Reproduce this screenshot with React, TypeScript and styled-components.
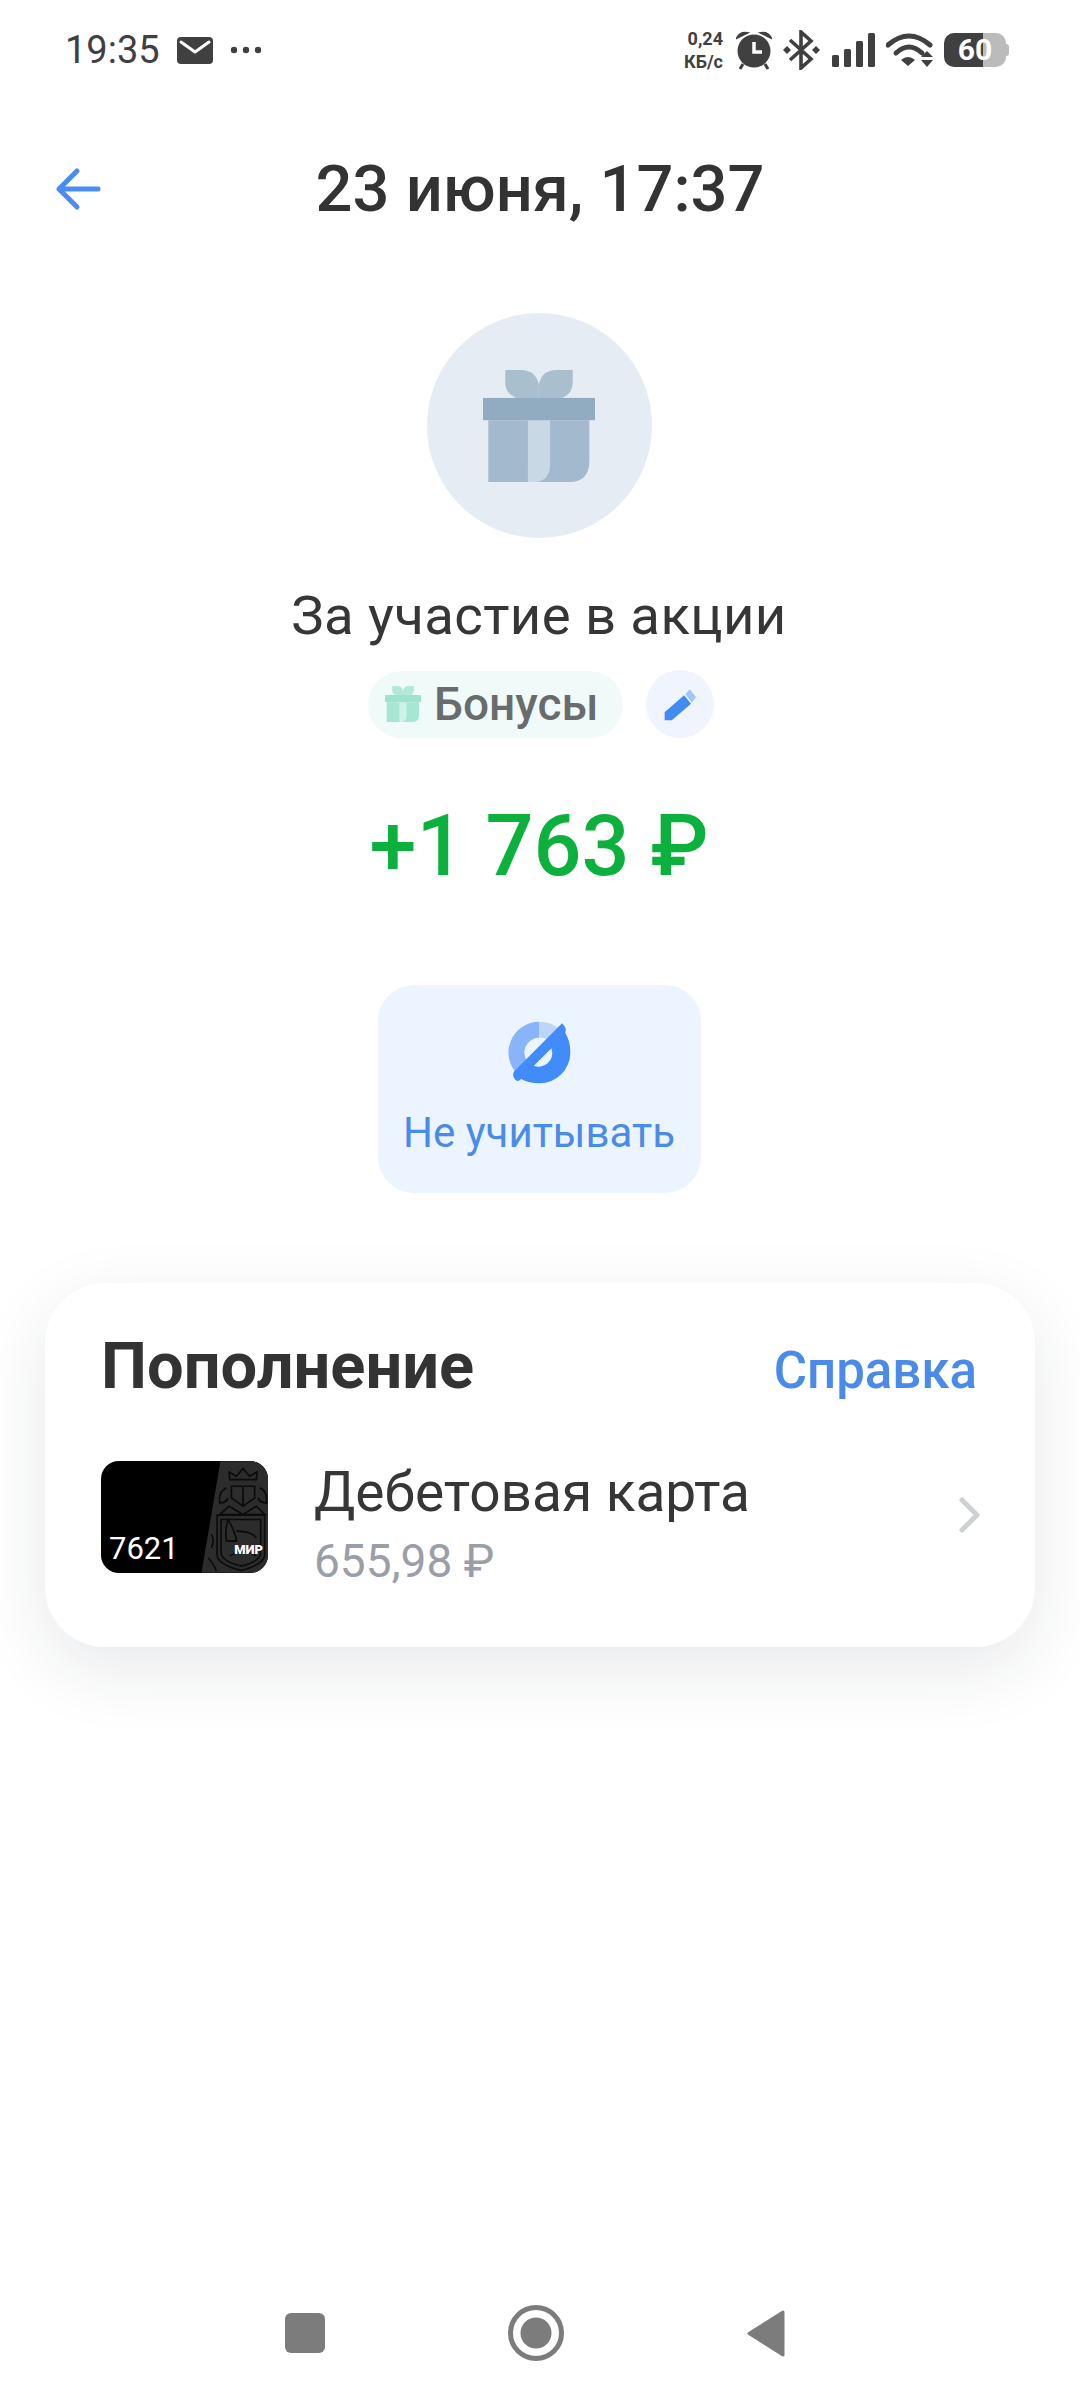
import React, { FC } from "react";
import styled, { createGlobalStyle } from "styled-components";

const GlobalStyle = createGlobalStyle`
  html, body {
    margin: 0;
    padding: 0;
    background: #ffffff;
  }
  body {
    font-family: Roboto, "Noto Sans", sans-serif;
  }
`;

const Page = styled.div`
  width: 1080px;
  height: 2400px;
  display: flex;
  flex-direction: column;
  background: #ffffff;
  color: #333333;
  overflow: hidden;
`;

const StatusBar = styled.div`
  height: 100px;
  display: flex;
  align-items: center;
  justify-content: space-between;
  padding: 0 71px 0 65px;
`;

const StatusGroup = styled.div<{ $gap: number }>`
  display: flex;
  align-items: center;
  gap: ${({ $gap }) => $gap}px;
`;

const Clock = styled.span`
  font-size: 38px;
  line-height: 40px;
  color: #404040;
`;

const NetSpeed = styled.div`
  display: flex;
  flex-direction: column;
  align-items: flex-end;
  font-size: 18px;
  line-height: 23px;
  font-weight: 700;
  color: #404040;
  margin-right: 2px;
`;

const Battery = styled.div`
  position: relative;
  width: 62px;
  height: 34px;
  margin-right: 3px;
  border-radius: 10px;
  background: linear-gradient(90deg, #404040 0 39px, #bbbbbb 39px);
  color: #ffffff;
  font-size: 30px;
  line-height: 34px;
  font-weight: 700;
  text-align: center;
  &::after {
    content: "";
    position: absolute;
    right: -3px;
    top: 11px;
    width: 3px;
    height: 12px;
    border-radius: 0 3px 3px 0;
    background: #bbbbbb;
  }
`;

const Header = styled.div`
  position: relative;
  margin-top: 38px;
  height: 100px;
  display: flex;
  align-items: center;
  justify-content: center;
`;

const BackButton = styled.div`
  position: absolute;
  left: 55px;
  top: 28px;
  display: flex;
`;

const Title = styled.h1`
  margin: 2px 0 0;
  font-size: 65px;
  line-height: 100px;
  font-weight: 500;
  color: #333333;
`;

const Hero = styled.div`
  display: flex;
  flex-direction: column;
  align-items: center;
  padding-right: 2px;
`;

const Avatar = styled.div`
  margin-top: 75px;
  width: 225px;
  height: 225px;
  border-radius: 50%;
  background: #e6ecf4;
  display: flex;
  align-items: center;
  justify-content: center;
`;

const Description = styled.div`
  margin-top: 42px;
  font-size: 54.5px;
  line-height: 70px;
  letter-spacing: 0.4px;
  color: #363636;
`;

const TagRow = styled.div`
  margin-top: 20px;
  display: flex;
  align-items: center;
  gap: 23px;
  padding-left: 4px;
`;

const CategoryChip = styled.div`
  width: 255px;
  height: 67px;
  border-radius: 34px;
  background: #f0fbf9;
  display: flex;
  align-items: center;
  gap: 13px;
  padding-left: 17px;
  box-sizing: border-box;
  font-size: 46px;
  font-weight: 500;
  color: #686c6c;
`;

const EditButton = styled.div`
  width: 68px;
  height: 68px;
  border-radius: 50%;
  background: #eff4fe;
  display: flex;
  align-items: center;
  justify-content: center;
`;

const Amount = styled.div`
  margin-top: 59px;
  font-size: 84.5px;
  line-height: 100px;
  font-weight: 500;
  color: #0cb03d;
`;

const IgnoreButton = styled.div`
  margin-top: 88px;
  width: 323px;
  height: 208px;
  border-radius: 36px;
  background: #ecf5ff;
  display: flex;
  flex-direction: column;
  align-items: center;
  padding-top: 36px;
  box-sizing: border-box;
  gap: 22px;
  font-size: 42px;
  line-height: 54px;
  color: #4a8ae8;
`;

const OperationCard = styled.div`
  margin: 90px 45px 0;
  height: 364px;
  padding: 48px 56px 0;
  box-sizing: border-box;
  border-radius: 60px;
  background: #ffffff;
  box-shadow: 0 22px 70px rgba(30, 40, 60, 0.1);
`;

const CardHeader = styled.div`
  display: flex;
  align-items: baseline;
  justify-content: space-between;
`;

const CardTitle = styled.div`
  font-size: 65px;
  line-height: 70px;
  font-weight: 700;
  color: #333333;
`;

const HelpLink = styled.div`
  font-size: 51px;
  font-weight: 500;
  color: #4a8ae8;
  margin-right: 2px;
`;

const AccountRow = styled.div`
  margin-top: 60px;
  display: flex;
  align-items: flex-start;
`;

const CardThumb = styled.div`
  position: relative;
  width: 167px;
  height: 112px;
  flex: none;
  border-radius: 18px;
  overflow: hidden;
  background: #000000;
`;

const ThumbArt = styled.svg`
  position: absolute;
  inset: 0;
`;

const ThumbNumber = styled.span`
  position: absolute;
  left: 8px;
  bottom: 6px;
  font-size: 31px;
  line-height: 36px;
  color: #ffffff;
`;

const ThumbBrand = styled.span`
  position: absolute;
  right: 5px;
  bottom: 17px;
  font-size: 13px;
  line-height: 12px;
  font-weight: 900;
  color: #ffffff;
`;

const AccountText = styled.div`
  flex: 1;
  margin-left: 46px;
  margin-top: -1px;
`;

const AccountName = styled.div`
  font-size: 55px;
  line-height: 64px;
  color: #363636;
`;

const AccountBalance = styled.div`
  margin-top: 10px;
  font-size: 46px;
  line-height: 54px;
  color: #9a9ea8;
`;

const Chevron = styled.svg`
  margin-top: 36px;
  margin-right: -2px;
`;

const Spacer = styled.div`
  flex: 1;
`;

const NavBar = styled.div`
  height: 137px;
  display: flex;
  align-items: flex-start;
  justify-content: center;
  gap: 183px;
  padding-right: 10px;
`;

const NavIcon = styled.svg<{ $top: number }>`
  margin-top: ${({ $top }) => $top}px;
`;

type GiftPalette = { bow: string; lid: string; box: string; ribbon: string };

const GiftIcon: FC<{ size: number; palette: GiftPalette }> = ({ size, palette }) => (
  <svg width={size} height={size} viewBox="430 238 337 337">
    <path
      d="M497 238H545Q590 240 598 282V322H530Q497 310 497 275Z"
      fill={palette.bow}
    />
    <path
      d="M700 238H650Q605 240 598 282V322H668Q700 310 700 275Z"
      fill={palette.bow}
    />
    <path d="M446 389H750V510Q750 575 690 575H446Z" fill={palette.box} />
    <path d="M565 389H632V520Q632 570 590 575H565Z" fill={palette.ribbon} />
    <rect x="430" y="322" width="337" height="67" fill={palette.lid} />
  </svg>
);

const App: FC = () => (
  <Page>
    <GlobalStyle />
    <StatusBar>
      <StatusGroup $gap={17}>
        <Clock>19:35</Clock>
        <svg width="36" height="27" viewBox="0 0 36 27">
          <rect width="36" height="27" rx="4" fill="#404040" />
          <path
            d="M4 5L18 15L32 5"
            fill="none"
            stroke="#fff"
            strokeWidth="3"
            strokeLinecap="round"
            strokeLinejoin="round"
          />
        </svg>
        <svg width="32" height="8" viewBox="0 0 32 8">
          <circle cx="4" cy="4" r="3.2" fill="#404040" />
          <circle cx="16" cy="4" r="3.2" fill="#404040" />
          <circle cx="28" cy="4" r="3.2" fill="#404040" />
        </svg>
      </StatusGroup>
      <StatusGroup $gap={11}>
        <NetSpeed>
          <span>0,24</span>
          <span>КБ/с</span>
        </NetSpeed>
        {/* alarm clock */}
        <svg width="36" height="40" viewBox="0 0 36 40">
          <circle cx="18" cy="21" r="16.5" fill="#404040" />
          <path d="M1 8Q4 2 11 3Z" fill="#404040" stroke="#404040" strokeWidth="2" />
          <path d="M35 8Q32 2 25 3Z" fill="#404040" stroke="#404040" strokeWidth="2" />
          <path d="M7 34L4 39M29 34L32 39" stroke="#404040" strokeWidth="3" />
          <path d="M18 12V22H26" fill="none" stroke="#fff" strokeWidth="3.5" />
        </svg>
        {/* bluetooth with connected dots */}
        <svg width="38" height="40" viewBox="0 0 38 40">
          <path
            d="M7 10L28 29L18 38V2L28 11L7 30"
            fill="none"
            stroke="#404040"
            strokeWidth="3.6"
            strokeLinejoin="miter"
          />
          <path d="M0 20L4 16L8 20L4 24Z" fill="#404040" />
          <path d="M29 20L33 16L37 20L33 24Z" fill="#404040" />
        </svg>
        <svg width="43" height="34" viewBox="0 0 43 34">
          <rect x="0" y="22" width="7" height="12" rx="1.5" fill="#404040" />
          <rect x="12" y="16" width="7" height="18" rx="1.5" fill="#404040" />
          <rect x="24" y="8" width="7" height="26" rx="1.5" fill="#404040" />
          <rect x="36" y="0" width="7" height="34" rx="1.5" fill="#404040" />
        </svg>
        <svg width="47" height="34" viewBox="0 0 47 34">
          <path d="M2 12Q23 -6 44 12" fill="none" stroke="#404040" strokeWidth="5" strokeLinecap="round" />
          <path d="M10 20Q23 8 36 20" fill="none" stroke="#404040" strokeWidth="5" strokeLinecap="round" />
          <path d="M15 27Q22 21 29 27L22 33Z" fill="#404040" />
          <path d="M35 24L41 18L47 24Z" fill="#404040" />
          <path d="M35 27L41 34L47 27Z" fill="#404040" />
        </svg>
        <Battery>60</Battery>
      </StatusGroup>
    </StatusBar>

    <Header>
      <BackButton>
        <svg width="46" height="46" viewBox="0 0 46 46">
          <path
            d="M43 23H4M22 5L4 23L22 41"
            fill="none"
            stroke="#4a8cf0"
            strokeWidth="5"
            strokeLinecap="round"
            strokeLinejoin="round"
          />
        </svg>
      </BackButton>
      <Title>23 июня, 17:37</Title>
    </Header>

    <Hero>
      <Avatar>
        <GiftIcon
          size={112}
          palette={{ bow: "#aabfce", lid: "#91acc1", box: "#a3b9ce", ribbon: "#c9d8e5" }}
        />
      </Avatar>
      <Description>За участие в акции</Description>
      <TagRow>
        <CategoryChip>
          <GiftIcon
            size={36}
            palette={{ bow: "#b4e8d8", lid: "#9fe3cf", box: "#a8e6d4", ribbon: "#cdf2e7" }}
          />
          Бонусы
        </CategoryChip>
        <EditButton>
          <svg width="34" height="33" viewBox="962 110 108 105">
            <path d="M967 187L1029 133L1051 160L990 213H967Z" fill="#428bf5" />
            <path d="M1033 130L1047 114L1067 139L1054 156Z" fill="#a0c4fb" />
          </svg>
        </EditButton>
      </TagRow>
      <Amount>+1 763 ₽</Amount>
      <IgnoreButton>
        <svg width="63" height="63" viewBox="442 150 190 190">
          <path
            d="M537 176A69 69 0 0 0 490 296"
            fill="none"
            stroke="#8ab4fa"
            strokeWidth="48"
          />
          <path
            d="M537 176A69 69 0 0 1 590 200"
            fill="none"
            stroke="#bcd5fd"
            strokeWidth="48"
          />
          <path
            d="M605 157Q620 170 615 186Q630 210 630 245A93 93 0 0 1 537 338Q505 338 482 325Q470 337 463 326Q454 314 460 302Z"
            fill="#428bfa"
          />
          <path d="M520 285L573 232Q582 260 560 279Q540 293 520 285Z" fill="#ecf5ff" />
        </svg>
        Не учитывать
      </IgnoreButton>
    </Hero>

    <OperationCard>
      <CardHeader>
        <CardTitle>Пополнение</CardTitle>
        <HelpLink>Справка</HelpLink>
      </CardHeader>
      <AccountRow>
        <CardThumb>
          {/* dark band with the heraldic pattern on the right of the card */}
          <ThumbArt width="167" height="112" viewBox="63 90 502 335">
            <path d="M422 90H565V425H365Z" fill="#2c2c2c" />
            <g fill="none" stroke="#0b0b0b" strokeWidth="5">
              <path d="M450 145L448 122L470 135L490 112L510 135L532 122L530 145Z" />
              <path d="M455 165H525V200L490 225L455 200Z" />
              <path d="M490 165V222" />
              <path d="M448 225L490 250L530 225L555 250H420Z" />
              <path d="M412 252H555V370Q555 400 485 418Q412 400 412 370Z" />
              <path d="M424 265H543V365Q543 390 485 405Q424 390 424 365Z" />
              <path d="M445 265Q470 310 470 330H440Q435 295 445 265Z" />
              <path d="M470 300Q515 300 530 320M450 375Q490 350 530 375" />
              <path d="M440 170Q415 180 420 215Q440 215 445 200" />
              <path d="M540 170Q565 180 560 215Q540 215 535 200" />
              <path d="M395 310Q405 330 395 350M385 380Q400 395 410 420" />
            </g>
          </ThumbArt>
          <ThumbNumber>7621</ThumbNumber>
          <ThumbBrand>МИР</ThumbBrand>
        </CardThumb>
        <AccountText>
          <AccountName>Дебетовая карта</AccountName>
          <AccountBalance>655,98 ₽</AccountBalance>
        </AccountText>
        <Chevron width="22" height="36" viewBox="0 0 22 36">
          <path
            d="M3 3L18 18L3 33"
            fill="none"
            stroke="#cdd0d5"
            strokeWidth="5"
            strokeLinecap="round"
            strokeLinejoin="round"
          />
        </Chevron>
      </AccountRow>
    </OperationCard>

    <Spacer />

    <NavBar>
      <NavIcon $top={50} width="40" height="40" viewBox="0 0 40 40">
        <rect width="40" height="40" rx="6" fill="#7c7c7c" />
      </NavIcon>
      <NavIcon $top={42} width="56" height="56" viewBox="0 0 56 56">
        <circle cx="28" cy="28" r="25.5" fill="none" stroke="#7c7c7c" strokeWidth="5" />
        <circle cx="28" cy="28" r="15.5" fill="#7c7c7c" />
      </NavIcon>
      <NavIcon $top={47} width="38" height="47" viewBox="0 0 38 47">
        <path d="M36 2V45L2 23.5Z" fill="#7c7c7c" stroke="#7c7c7c" strokeWidth="3" strokeLinejoin="round" />
      </NavIcon>
    </NavBar>
  </Page>
);

export default App;
